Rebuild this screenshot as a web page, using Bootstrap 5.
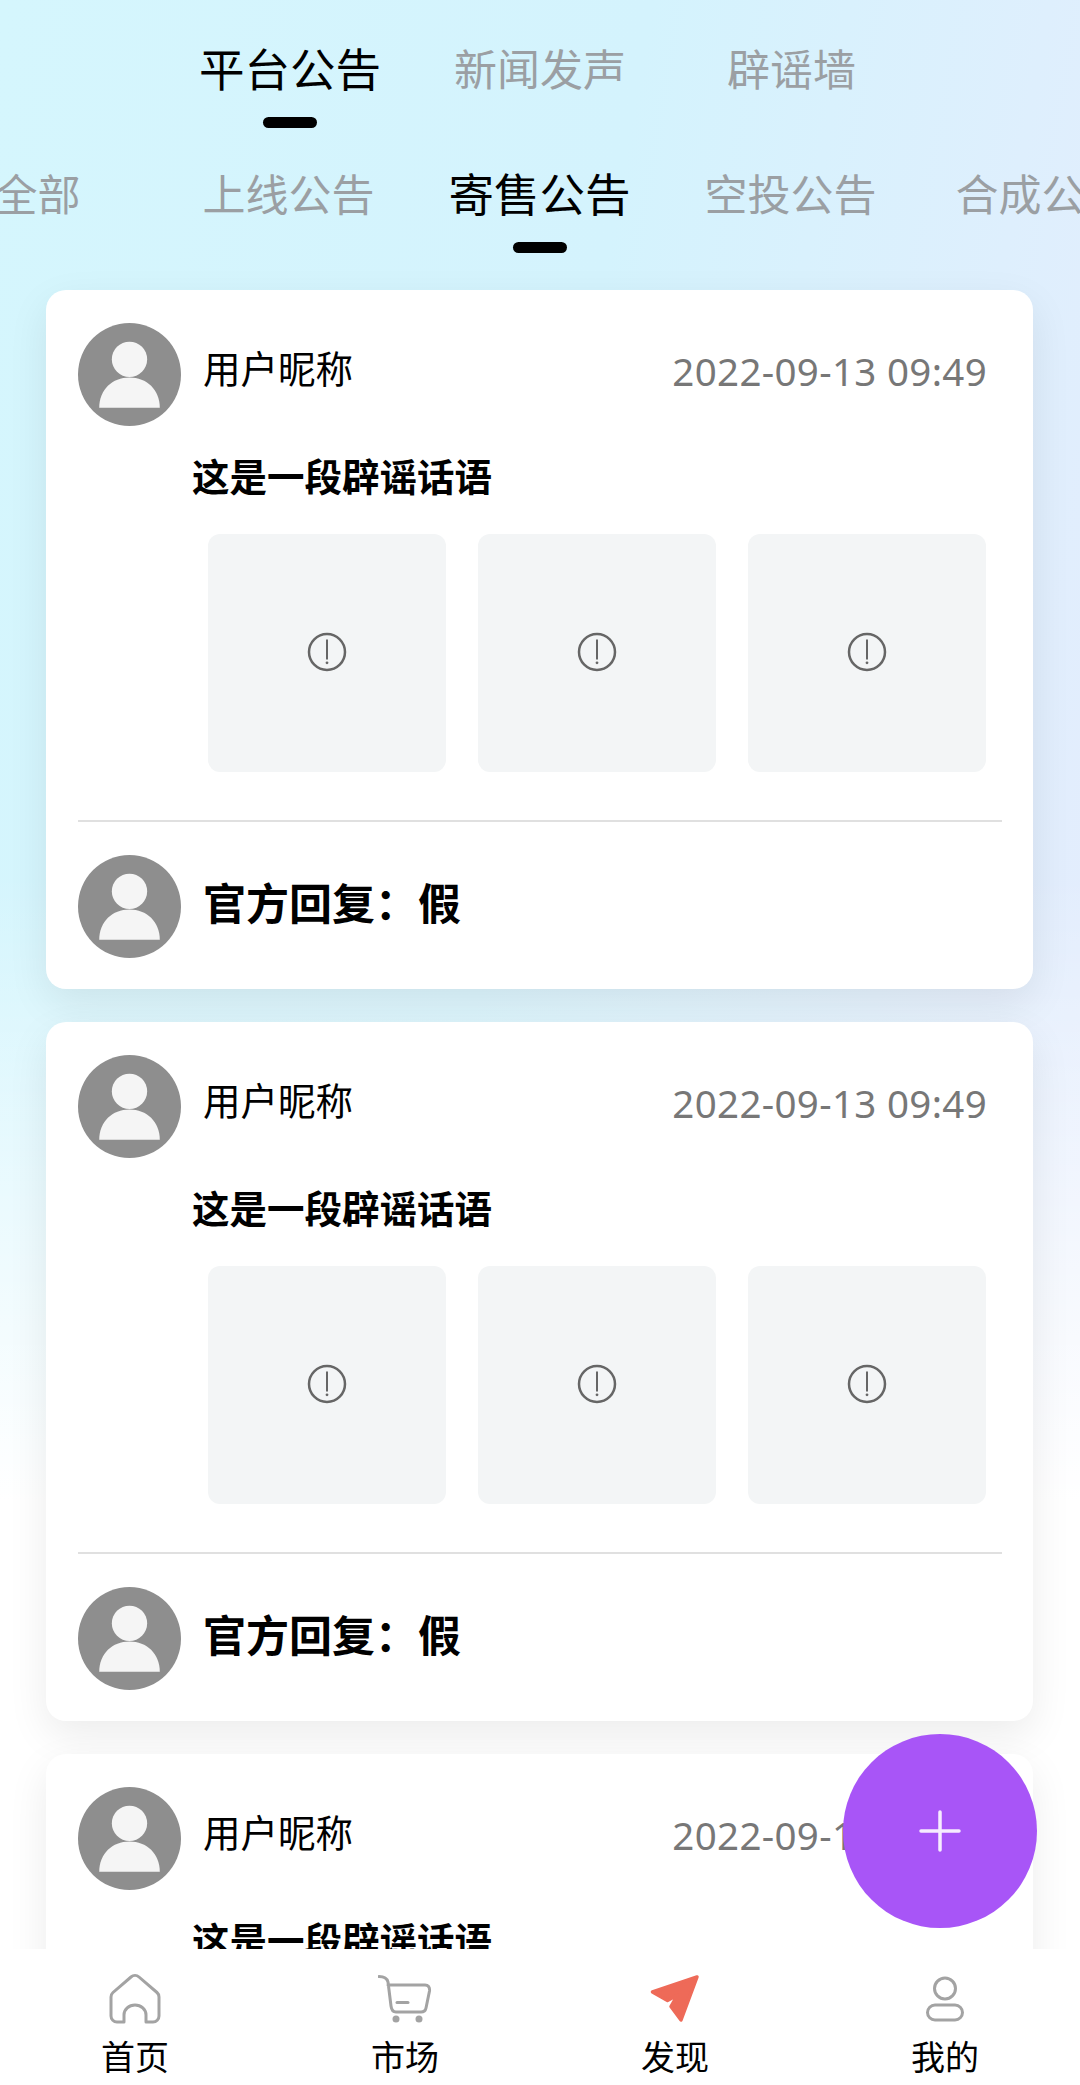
<!DOCTYPE html>
<html lang="zh-CN">
<head>
    <meta charset="UTF-8">
    <meta name="viewport" content="width=device-width, initial-scale=1.0">
    <title>辟谣墙</title>
    <link href="https://cdn.jsdelivr.net/npm/bootstrap@5.3.0/dist/css/bootstrap.min.css" rel="stylesheet">
    <style>
        html, body { height: 100%; }
        body {
            font-family: "Noto Sans CJK SC", "Noto Sans", sans-serif;
            overflow: hidden;
            background:
                linear-gradient(to bottom, rgba(255,255,255,0) 42%, #fff 72%),
                linear-gradient(100deg, #d5f6fd 0%, #d4f3fd 45%, #e8ebfd 100%);
        }
        .app-page { height: 100vh; position: relative; }
        .tab-row { flex: none; overflow: hidden; }
        .tab-row-main { padding: 37px 0 0 0; }
        .tab-row-main .tab-item { width: 250px; }
        .tab-row-main .tab-item:last-child { padding-left: 3px; }
        .tab-row-sub { margin-top: 34px; padding-left: 0; }
        .tab-scroll { margin-left: -88px; }
        .tab-item { width: 251px; flex: none; color: #9b9fa3; font-size: 43px; line-height: 60px; }
        .tab-item.active-tab { color: #000; font-size: 45.500px; }
        .tab-mark { width: 54px; height: 11px; border-radius: 6px; background: #000; margin-top: 20px; visibility: hidden; }
        .active-tab .tab-mark { visibility: visible; }
        .feed { flex: 1 1 0; min-height: 0; overflow: hidden; padding: 37px 47px 0 46px; }
        .post-card { border-radius: 20px; padding: 33px 31px 31px 32px; margin-bottom: 33px; flex: none; box-shadow: 0 14px 40px rgba(0,0,0,.08); }
        .avatar-pic { width: 103px; height: 103px; flex: none; display: block; }
        .user-name { font-size: 37.500px; line-height: 50px; color: #000; margin: 0 0 16px 22px; }
        .post-time { font-family: "Noto Sans", sans-serif; font-size: 38.500px; letter-spacing: .33px; color: #777; margin: 0 15px 8px auto; line-height: 50px; white-space: nowrap; }
        .post-text { font-size: 37.500px; font-weight: 700; line-height: 50px; color: #000; margin: 24px 0 0 114px; }
        .pic-row { margin: 34px 16px 0 130px; gap: 32px; }
        .pic-slot { width: 238px; height: 238px; flex: none; background: #f3f5f6; border-radius: 12px; }
        .pic-slot svg { width: 44px; height: 44px; margin-top: -2px; }
        .post-line { height: 2px; background: #e0e0e0; margin: 48px 0 33px; }
        .reply-text { font-size: 43px; font-weight: 700; color: #000; line-height: 60px; margin: 0 0 12px 22px; }
        .fab-add { position: absolute; left: 843px; top: 1734px; width: 194px; height: 194px; border: 0; background: #a855f7; }
        .fab-add svg { width: 44px; height: 44px; }
        .bottom-bar { flex: none; background: #fff; padding: 23px 0 9px; position: relative; }
        .bar-item { width: 270px; color: #000; font-size: 34px; line-height: 40px; }
        .bar-item svg { width: 54px; height: 54px; margin-bottom: 10px; }
    </style>
</head>
<body>
    <svg width="0" height="0" class="position-absolute">
        <symbol id="ico-avatar" viewBox="0 0 102 102">
            <circle cx="51" cy="51" r="51" fill="#8e8e8e"/>
            <circle cx="51" cy="36" r="17.500" fill="#f5f5f5"/>
            <path d="M21 84C21 66 34 54 51 54S81 66 81 84Z" fill="#f5f5f5"/>
        </symbol>
        <symbol id="ico-alert" viewBox="0 0 44 44">
            <circle cx="22" cy="22" r="18" fill="none" stroke="#666" stroke-width="2.500"/>
            <path d="M22 9.500V29.500" stroke="#666" stroke-width="2"/>
            <circle cx="22" cy="32.800" r="1.400" fill="#666"/>
        </symbol>
    </svg>

    <div class="app-page d-flex flex-column">
        <div class="tab-row tab-row-main d-flex justify-content-center">
            <div class="tab-item active-tab d-flex flex-column align-items-center">平台公告<div class="tab-mark"></div></div>
            <div class="tab-item d-flex flex-column align-items-center">新闻发声<div class="tab-mark"></div></div>
            <div class="tab-item d-flex flex-column align-items-center">辟谣墙<div class="tab-mark"></div></div>
        </div>
        <div class="tab-row tab-row-sub">
            <div class="tab-scroll d-flex">
                <div class="tab-item d-flex flex-column align-items-center">全部<div class="tab-mark"></div></div>
                <div class="tab-item d-flex flex-column align-items-center">上线公告<div class="tab-mark"></div></div>
                <div class="tab-item active-tab d-flex flex-column align-items-center">寄售公告<div class="tab-mark"></div></div>
                <div class="tab-item d-flex flex-column align-items-center">空投公告<div class="tab-mark"></div></div>
                <div class="tab-item d-flex flex-column align-items-center">合成公告<div class="tab-mark"></div></div>
            </div>
        </div>

        <div class="feed d-flex flex-column" id="feed"></div>

        <nav class="bottom-bar d-flex">
            <div class="bar-item d-flex flex-column align-items-center">
                <svg viewBox="0 0 54 54" fill="none" stroke="#a3a3a3" stroke-width="3" stroke-linejoin="round"><path d="M16 50H9a6 6 0 0 1-6-6V25a6 6 0 0 1 2-4.500L23 5a6 6 0 0 1 8 0L49 20.500a6 6 0 0 1 2 4.500V44a6 6 0 0 1-6 6H38V43a11 10 0 0 0-22 0Z"/></svg>
                首页
            </div>
            <div class="bar-item d-flex flex-column align-items-center">
                <svg viewBox="0 0 54 54" fill="none" stroke="#a3a3a3" stroke-width="3" stroke-linecap="round" stroke-linejoin="round"><path d="M1 4.500C6 4.500 9 6 10 10L13 34C13.500 38 15 40 18 40H43C46 40 47.500 38.500 48 36L51.500 19C52 15 50 13 47 13H10"/><path d="M19 30.500H30"/><circle cx="18" cy="47" r="3.500" fill="#a3a3a3" stroke="none"/><circle cx="41" cy="47" r="3.500" fill="#a3a3a3" stroke="none"/></svg>
                市场
            </div>
            <div class="bar-item d-flex flex-column align-items-center">
                <svg viewBox="0 0 54 54" fill="#ee6a58" stroke="#ee6a58" stroke-width="3.500" stroke-linejoin="round"><path d="M49 5L4.500 20L19.500 28.500L29.500 23L23 34.500L33 48Z"/></svg>
                发现
            </div>
            <div class="bar-item d-flex flex-column align-items-center">
                <svg viewBox="0 0 54 54" fill="none" stroke="#a3a3a3" stroke-width="3"><circle cx="27" cy="16.500" r="10.500"/><rect x="9.500" y="33" width="35" height="15" rx="7.500"/></svg>
                我的
            </div>
        </nav>

        <button class="fab-add rounded-circle d-flex align-items-center justify-content-center" type="button" aria-label="add">
            <svg viewBox="0 0 44 44" stroke="#f6ecff" stroke-width="3.500" stroke-linecap="round"><path d="M22 3V41M3 22H41"/></svg>
        </button>
    </div>

    <script src="https://cdn.jsdelivr.net/npm/bootstrap@5.3.0/dist/js/bootstrap.bundle.min.js"></script>
    <script>
        const picSlot = `<div class="pic-slot d-flex align-items-center justify-content-center"><svg><use href="#ico-alert"/></svg></div>`;
        const postHtml = `
            <div class="card border-0 post-card">
                <div class="d-flex align-items-center">
                    <svg class="avatar-pic"><use href="#ico-avatar"/></svg>
                    <span class="user-name">用户昵称</span>
                    <span class="post-time">2022-09-13 09:49</span>
                </div>
                <div class="post-text">这是一段辟谣话语</div>
                <div class="pic-row d-flex">${picSlot}${picSlot}${picSlot}</div>
                <div class="post-line"></div>
                <div class="d-flex align-items-center">
                    <svg class="avatar-pic"><use href="#ico-avatar"/></svg>
                    <span class="reply-text">官方回复：假</span>
                </div>
            </div>`;
        document.getElementById('feed').innerHTML = postHtml + postHtml + postHtml;
    </script>
</body>
</html>
